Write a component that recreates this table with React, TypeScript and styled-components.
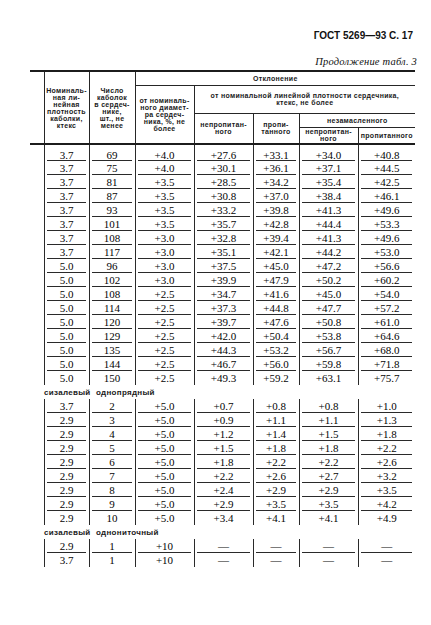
import React from 'react';
import styled, {createGlobalStyle} from 'styled-components';

const GlobalStyle = createGlobalStyle`
  html, body {
    margin: 0;
    padding: 0;
    background: #ffffff;
  }
`;

const Page = styled.div`
  width: 431px;
  height: 625px;
  box-sizing: border-box;
  padding: 30px 0 0 30px;
  color: #111111;
`;

const RunningHead = styled.div`
  font-family: "Liberation Sans", Arial, sans-serif;
  font-weight: bold;
  font-size: 10px;
  line-height: 12px;
  text-align: right;
  padding-right: 18px;
`;

const Continuation = styled.div`
  margin-top: 14px;
  font-family: "Liberation Serif", "Times New Roman", serif;
  font-style: italic;
  font-size: 10.5px;
  line-height: 12px;
  text-align: right;
  padding-right: 14px;
  letter-spacing: 0.2px;
`;

const Sheet = styled.table`
  margin-top: 2px;
  width: 385px;
  table-layout: fixed;
  border-collapse: collapse;
  border-spacing: 0;
`;

const Head = styled.thead`
  border-top: 2px solid #1c1c1c;
  border-bottom: 2px solid #1c1c1c;
`;

const HeadRow = styled.tr<{ $h: number }>`
  height: ${p => p.$h}px;
`;

const HeadCell = styled.th<{ $open?: boolean }>`
  padding: 0 1px;
  border: 1px solid #262626;
  border-left: ${p => (p.$open ? 'none' : '1px solid #262626')};
  border-right-style: ${p => (p.$open ? 'none' : 'solid')};
  font-family: "Liberation Sans", Arial, sans-serif;
  font-weight: bold;
  font-size: 7px;
  line-height: 7px;
  letter-spacing: 0.3px;
  text-align: center;
  vertical-align: middle;
  color: #1a1a1a;
  &:last-child {
    border-right: none;
  }
`;

const Row = styled.tr<{ $tall?: boolean }>`
  height: ${p => (p.$tall ? 17 : 14)}px;
`;

const Gutter = styled.td`
  padding: 0;
  border: none;
`;

const Cell = styled.td<{ $rule: boolean; $tall?: boolean }>`
  padding: ${p => (p.$tall ? '3px 0 0' : '0')};
  border-left: 1px solid #2a2a2a;
  font-family: "Liberation Serif", "Times New Roman", serif;
  font-size: 11px;
  line-height: 12px;
  text-align: center;
  vertical-align: middle;
  color: #050505;
  background: ${p =>
    p.$rule
      ? 'linear-gradient(#2a2a2a, #2a2a2a) no-repeat center bottom / calc(100% - 5px) 1px'
      : 'none'};
`;

const LabelRow = styled.tr`
  height: 14px;
`;

const GroupLabel = styled.td`
  padding: 1px 0 0 14px;
  border: none;
  font-family: "Liberation Sans", Arial, sans-serif;
  font-weight: bold;
  font-size: 8px;
  line-height: 10px;
  letter-spacing: 0.3px;
  word-spacing: 3px;
  text-align: left;
  vertical-align: middle;
  color: #1a1a1a;
`;

type Line = string[];

const groups: { label?: string; rows: Line[] }[] = [
  {
    rows: [
      ['3.7', '69', '+4.0', '+27.6', '+33.1', '+34.0', '+40.8'],
      ['3.7', '75', '+4.0', '+30.1', '+36.1', '+37.1', '+44.5'],
      ['3.7', '81', '+3.5', '+28.5', '+34.2', '+35.4', '+42.5'],
      ['3.7', '87', '+3.5', '+30.8', '+37.0', '+38.4', '+46.1'],
      ['3.7', '93', '+3.5', '+33.2', '+39.8', '+41.3', '+49.6'],
      ['3.7', '101', '+3.5', '+35.7', '+42.8', '+44.4', '+53.3'],
      ['3.7', '108', '+3.0', '+32.8', '+39.4', '+41.3', '+49.6'],
      ['3.7', '117', '+3.0', '+35.1', '+42.1', '+44.2', '+53.0'],
      ['5.0', '96', '+3.0', '+37.5', '+45.0', '+47.2', '+56.6'],
      ['5.0', '102', '+3.0', '+39.9', '+47.9', '+50.2', '+60.2'],
      ['5.0', '108', '+2.5', '+34.7', '+41.6', '+45.0', '+54.0'],
      ['5.0', '114', '+2.5', '+37.3', '+44.8', '+47.7', '+57.2'],
      ['5.0', '120', '+2.5', '+39.7', '+47.6', '+50.8', '+61.0'],
      ['5.0', '129', '+2.5', '+42.0', '+50.4', '+53.8', '+64.6'],
      ['5.0', '135', '+2.5', '+44.3', '+53.2', '+56.7', '+68.0'],
      ['5.0', '144', '+2.5', '+46.7', '+56.0', '+59.8', '+71.8'],
      ['5.0', '150', '+2.5', '+49.3', '+59.2', '+63.1', '+75.7'],
    ],
  },
  {
    label: 'сизалевый однопрядный',
    rows: [
      ['3.7', '2', '+5.0', '+0.7', '+0.8', '+0.8', '+1.0'],
      ['2.9', '3', '+5.0', '+0.9', '+1.1', '+1.1', '+1.3'],
      ['2.9', '4', '+5.0', '+1.2', '+1.4', '+1.5', '+1.8'],
      ['2.9', '5', '+5.0', '+1.5', '+1.8', '+1.8', '+2.2'],
      ['2.9', '6', '+5.0', '+1.8', '+2.2', '+2.2', '+2.6'],
      ['2.9', '7', '+5.0', '+2.2', '+2.6', '+2.7', '+3.2'],
      ['2.9', '8', '+5.0', '+2.4', '+2.9', '+2.9', '+3.5'],
      ['2.9', '9', '+5.0', '+2.9', '+3.5', '+3.5', '+4.2'],
      ['2.9', '10', '+5.0', '+3.4', '+4.1', '+4.1', '+4.9'],
    ],
  },
  {
    label: 'сизалевый однониточный',
    rows: [
      ['2.9', '1', '+10', '—', '—', '—', '—'],
      ['3.7', '1', '+10', '—', '—', '—', '—'],
    ],
  },
];

const widths = [14, 45, 46, 59, 59, 46, 59, 57];

export default function App() {
  return (
    <Page>
      <GlobalStyle />
      <RunningHead>ГОСТ 5269—93 С. 17</RunningHead>
      <Continuation>Продолжение табл. 3</Continuation>
      <Sheet>
        <colgroup>
          {widths.map((w, i) => (
            <col key={i} style={{width: w}} />
          ))}
        </colgroup>
        <Head>
          <HeadRow $h={14}>
            <HeadCell rowSpan={4} $open />
            <HeadCell rowSpan={4}>
              Номиналь-<br />ная ли-<br />нейная<br />плотность<br />каболки,<br />ктекс
            </HeadCell>
            <HeadCell rowSpan={4}>
              Число<br />каболок<br />в сердеч-<br />нике,<br />шт., не<br />менее
            </HeadCell>
            <HeadCell colSpan={5}>Отклонение</HeadCell>
          </HeadRow>
          <HeadRow $h={28}>
            <HeadCell rowSpan={3}>
              от номиналь-<br />ного диамет-<br />ра сердеч-<br />ника, %, не<br />более
            </HeadCell>
            <HeadCell colSpan={4}>
              от номинальной линейной плотности сердечника,<br />ктекс, не более
            </HeadCell>
          </HeadRow>
          <HeadRow $h={14}>
            <HeadCell rowSpan={2}>
              непропитан-<br />ного
            </HeadCell>
            <HeadCell rowSpan={2}>
              пропи-<br />танного
            </HeadCell>
            <HeadCell colSpan={2}>незамасленного</HeadCell>
          </HeadRow>
          <HeadRow $h={17}>
            <HeadCell>
              непропитан-<br />ного
            </HeadCell>
            <HeadCell>пропитанного</HeadCell>
          </HeadRow>
        </Head>
        {groups.map((g, gi) => (
          <tbody key={gi}>
            {g.label && (
              <LabelRow>
                <GroupLabel colSpan={8}>{g.label}</GroupLabel>
              </LabelRow>
            )}
            {g.rows.map((r, ri) => {
              const tall = gi === 0 && ri === 0;
              const rule = ri < g.rows.length - 1;
              return (
                <Row key={ri} $tall={tall}>
                  <Gutter />
                  {r.map((v, ci) => (
                    <Cell key={ci} $rule={rule} $tall={tall}>
                      {v}
                    </Cell>
                  ))}
                </Row>
              );
            })}
          </tbody>
        ))}
      </Sheet>
    </Page>
  );
}
